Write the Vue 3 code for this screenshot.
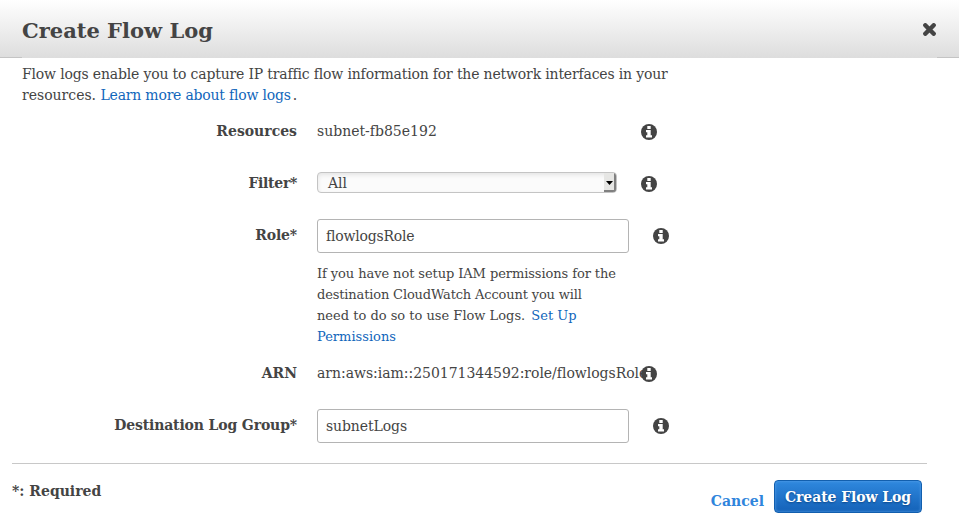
<script setup>
import { ref } from 'vue'

const filter = ref('All')
const role = ref('flowlogsRole')
const logGroup = ref('subnetLogs')

const rows = [
  { key: 'resources', label: 'Resources', text: 'subnet-fb85e192' },
  { key: 'filter', label: 'Filter*' },
  { key: 'role', label: 'Role*', wide: true },
  { key: 'arn', label: 'ARN', text: 'arn:aws:iam::250171344592:role/flowlogsRole' },
  { key: 'group', label: 'Destination Log Group*', wide: true },
]
</script>

<template>
  <div class="dialog">
    <header class="header">
      <h1 class="title">Create Flow Log</h1>
      <button class="close" aria-label="Close">
        <svg viewBox="0 0 13 13" width="13" height="13">
          <path d="M2.3 2.3L10.7 10.7M10.7 2.3L2.3 10.7" stroke="#444" stroke-width="4.4" stroke-linecap="round" />
        </svg>
      </button>
    </header>

    <p class="intro">
      <span class="intro-first">Flow logs enable you to capture IP traffic flow information for the network interfaces in your</span><br />resources.
      <a class="link intro-link">Learn more about flow logs</a>.
    </p>

    <section class="form">
      <div v-for="row in rows" :key="row.key" class="row" :class="row.key">
        <label class="label">{{ row.label }}</label>
        <div class="field" :class="{ wide: row.wide }">
          <span v-if="row.text" class="value">{{ row.text }}</span>
          <div v-else-if="row.key === 'filter'" class="select">
            <span>{{ filter }}</span>
            <span class="arrow"><svg viewBox="0 0 7 4" width="7" height="4"><path d="M0 0H7L3.5 4Z" fill="#000" /></svg></span>
          </div>
          <template v-else-if="row.key === 'role'">
            <input v-model="role" class="input" />
            <p class="hint">
              <span class="hint-first">If you have not setup IAM permissions for the</span><br /><span class="hint-second">destination CloudWatch Account you will</span><br />need to do so to use Flow Logs.
              <a class="link hint-link">Set Up<br />Permissions</a>
            </p>
          </template>
          <input v-else v-model="logGroup" class="input" />
        </div>
        <svg class="info" viewBox="0 0 16 16" width="16" height="16">
          <circle cx="8" cy="8" r="8" fill="#444" />
          <path d="M6.3 2H9.7V5H6.3ZM5 6H9.7V11.2H11V13.5H5V11.2H6.3V8.2H5Z" fill="#fff" />
        </svg>
      </div>
    </section>

    <footer class="footer">
      <span class="required">*: Required</span>
      <div class="actions">
        <a class="cancel">Cancel</a>
        <button class="submit">Create Flow Log</button>
      </div>
    </footer>
  </div>
</template>

<style>
body {
  margin: 0;
  background: #fff;
}
</style>

<style scoped>
.dialog {
  box-sizing: border-box;
  width: 959px;
  height: 529px;
  overflow: hidden;
  font-family: "DejaVu Serif", serif;
  font-size: 14px;
  line-height: 21px;
  color: #444;
}
.header {
  box-sizing: border-box;
  height: 58px;
  display: flex;
  align-items: flex-start;
  justify-content: space-between;
  padding: 0 22px;
  background:
    linear-gradient(#c4c4c4, #c4c4c4) left bottom / 22px 1px no-repeat,
    linear-gradient(#c4c4c4, #c4c4c4) right bottom / 22px 1px no-repeat,
    linear-gradient(#fff, #ddd);
}
.title {
  margin: 16px 0 0;
  font-size: 21px;
  line-height: 30px;
  font-weight: bold;
}
.close {
  display: block;
  margin: 23px 1px 0 0;
  padding: 0;
  border: 0;
  background: none;
  line-height: 0;
}
.close svg {
  display: block;
}
.intro {
  margin: 6px 0 0 22px;
  white-space: nowrap;
}
.intro-first {
  letter-spacing: -0.17px;
}
.link {
  color: #1166bb;
}
.intro-link {
  margin: 0 2px 0 0;
  letter-spacing: -0.21px;
}
.form {
  padding-top: 10px;
}
.row {
  display: flex;
  align-items: flex-start;
  height: 52px;
}
.role {
  height: 138px;
}
.label {
  width: 297px;
  padding-top: 5px;
  margin-right: 20px;
  text-align: right;
  font-weight: bold;
  line-height: 21px;
}
.filter .label {
  letter-spacing: -0.3px;
}
.role .label {
  letter-spacing: -0.15px;
}
.group .label {
  letter-spacing: -0.14px;
}
.field {
  width: 300px;
  flex: none;
  padding-top: 5px;
  margin-right: 24px;
  white-space: nowrap;
}
.filter .field {
  padding-top: 4px;
}
.field.wide {
  width: 312px;
  padding-top: 0;
  margin-top: -1px;
}
.value {
  display: block;
}
.arn .value {
  letter-spacing: -0.03px;
}
.select {
  box-sizing: border-box;
  display: flex;
  align-items: center;
  justify-content: space-between;
  width: 300px;
  height: 21px;
  padding-left: 10px;
  border: 1px solid #c4c4c4;
  border-radius: 4px;
  background: #fbfbfb;
  box-shadow: inset 0 2px 4px #e4e4e4;
  overflow: hidden;
}
.select > span:first-child {
  padding-top: 1px;
}
.arrow {
  box-sizing: border-box;
  width: 12px;
  height: 19px;
  padding-top: 2px;
  display: flex;
  align-items: center;
  justify-content: center;
  background: #e6e6e4;
  border-right: 2px solid #808080;
  border-bottom: 2px solid #808080;
}
.input {
  box-sizing: border-box;
  display: block;
  width: 312px;
  height: 34px;
  padding: 0 8px;
  border: 1px solid #b4b4b4;
  border-radius: 3px;
  background: #fff;
  color: #444;
  font: inherit;
  outline: none;
}
.role .input {
  letter-spacing: -0.21px;
}
.group .input {
  letter-spacing: -0.1px;
}
.hint {
  margin: 10px 0 0;
  font-size: 13px;
}
.hint-first {
  letter-spacing: -0.08px;
}
.hint-second {
  letter-spacing: -0.15px;
}
.hint-link {
  margin-left: 2px;
}
.info {
  flex: none;
  margin-top: 8px;
  position: relative;
}
.footer {
  display: flex;
  justify-content: space-between;
  width: 915px;
  box-sizing: border-box;
  margin: 1px 0 0 12px;
  border-top: 1px solid #c8c8c8;
  font-weight: bold;
}
.required {
  padding-top: 17px;
}
.actions {
  display: flex;
  align-items: flex-start;
  padding: 16px 5px 0 0;
}
.cancel {
  margin: 11px 10px 0 0;
  color: #2f85dc;
}
.submit {
  box-sizing: border-box;
  width: 148px;
  height: 33px;
  padding: 2px 0 0;
  border: 1px solid #125fae;
  border-radius: 4px;
  background: linear-gradient(#2f88de, #1462b8);
  box-shadow: inset 0 0 3px #5ba3ea;
  color: #fff;
  font: inherit;
  letter-spacing: -0.08px;
  text-shadow: 0 1px 2px #0a4688;
  white-space: nowrap;
}
</style>
